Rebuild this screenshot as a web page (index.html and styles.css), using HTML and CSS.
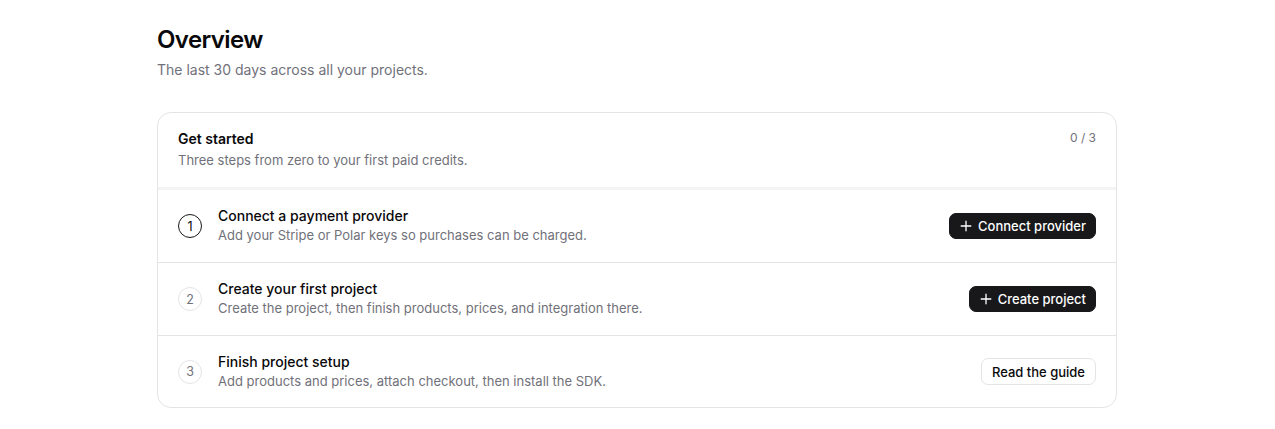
FILE: index.html
```html
<!DOCTYPE html>
<html lang="en">
<head>
<meta charset="utf-8">
<title>Overview</title>
<link rel="stylesheet" href="styles.css">
</head>
<body>
<main class="page">
  <header class="page-head">
    <h1 class="page-title">Overview</h1>
    <p class="page-sub">The last 30 days across all your projects.</p>
  </header>

  <section class="card">
    <div class="card-head">
      <div>
        <h2 class="card-title">Get started</h2>
        <p class="card-sub">Three steps from zero to your first paid credits.</p>
      </div>
      <span class="progress">0 / 3</span>
    </div>

    <ol class="steps">
      <li class="step">
        <span class="num num-active">1</span>
        <div class="step-text">
          <div class="step-title">Connect a payment provider</div>
          <div class="step-desc">Add your Stripe or Polar keys so purchases can be charged.</div>
        </div>
        <button class="btn btn-dark">
          <svg class="plus" viewBox="0 0 16 16" width="14" height="14" aria-hidden="true"><path d="M8 2.5v11M2.5 8h11" stroke="currentColor" stroke-width="1.5" stroke-linecap="round" fill="none"/></svg>
          Connect provider
        </button>
      </li>
      <li class="step">
        <span class="num">2</span>
        <div class="step-text">
          <div class="step-title">Create your first project</div>
          <div class="step-desc">Create the project, then finish products, prices, and integration there.</div>
        </div>
        <button class="btn btn-dark">
          <svg class="plus" viewBox="0 0 16 16" width="14" height="14" aria-hidden="true"><path d="M8 2.5v11M2.5 8h11" stroke="currentColor" stroke-width="1.5" stroke-linecap="round" fill="none"/></svg>
          Create project
        </button>
      </li>
      <li class="step">
        <span class="num">3</span>
        <div class="step-text">
          <div class="step-title">Finish project setup</div>
          <div class="step-desc">Add products and prices, attach checkout, then install the SDK.</div>
        </div>
        <button class="btn btn-light">Read the guide</button>
      </li>
    </ol>
  </section>
</main>
</body>
</html>
```

FILE: styles.css
```css
* { box-sizing: border-box; }

body {
  margin: 0;
  padding-right: 1px;
  background: #ffffff;
  font-family: Inter, "Noto Sans", "Liberation Sans", sans-serif;
  color: #09090b;
}

.page {
  max-width: 960px;
  margin: 0 auto;
  padding-top: 25px;
}

.page-head { margin-bottom: 32px; }

.page-title {
  margin: 0;
  font-size: 24px;
  line-height: 30px;
  font-weight: 600;
  letter-spacing: -0.025em;
}

.page-sub {
  margin: 5px 0 0;
  font-size: 14px;
  line-height: 20px;
  color: #71717a;
}

.card {
  border: 1px solid #e4e4e7;
  border-radius: 14px;
  overflow: hidden;
}

.card-head {
  display: flex;
  justify-content: space-between;
  align-items: flex-start;
  padding: 17px 20px 18px 20px;
  border-bottom: 3px solid #f4f4f5;
}

.card-title {
  margin: 0;
  font-size: 14px;
  line-height: 18px;
  font-weight: 600;
}

.card-sub {
  margin: 3px 0 0;
  font-size: 13px;
  line-height: 18px;
  color: #71717a;
}

.progress {
  font-size: 12px;
  line-height: 16px;
  color: #71717a;
}

.steps {
  list-style: none;
  margin: 0;
  padding: 0;
}

.step {
  display: flex;
  align-items: center;
  gap: 16px;
  height: 73px;
  padding: 0 20px;
  border-top: 1px solid #e4e4e7;
}
.step:first-child { border-top: 0; height: 72px; }
.step:last-child { height: 72px; }

.num {
  flex: none;
  width: 24px;
  height: 24px;
  border-radius: 50%;
  border: 1px solid #e4e4e7;
  display: flex;
  align-items: center;
  justify-content: center;
  font-size: 12.5px;
  color: #71717a;
}
.num-active {
  border-color: #18181b;
  color: #09090b;
}

.step-text {
  flex: 1;
  min-width: 0;
  padding-bottom: 1px;
}

.step-title {
  font-size: 14px;
  line-height: 18px;
  font-weight: 500;
}

.step-desc {
  margin-top: 1px;
  font-size: 13px;
  line-height: 18px;
  color: #71717a;
}

.btn {
  flex: none;
  display: inline-flex;
  align-items: center;
  gap: 5px;
  height: 26px;
  padding: 0 9px;
  border-radius: 7px;
  font-family: inherit;
  font-size: 13px;
  font-weight: 500;
  cursor: pointer;
}
.btn-dark {
  background: #18181b;
  color: #ffffff;
  border: 1px solid #18181b;
}
.btn-light {
  background: #ffffff;
  color: #09090b;
  border: 1px solid #e4e4e7;
  height: 27px;
  padding: 0 10px;
}
.plus { display: block; }
```
